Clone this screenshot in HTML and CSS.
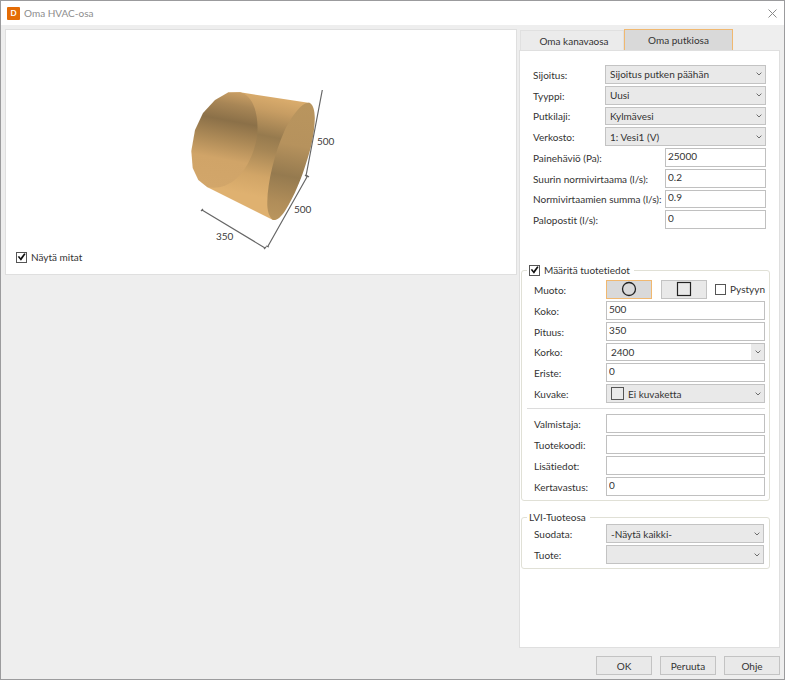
FILE: index.html
```html
<!DOCTYPE html>
<html lang="fi">
<head>
<meta charset="utf-8">
<title>Oma HVAC-osa</title>
<link rel="stylesheet" href="styles.css">
</head>
<body>
<svg class="symbols" width="0" height="0" aria-hidden="true">
  <symbol id="chevron" viewBox="0 0 6 4"><path d="M.6.6 3 3 5.4.6" fill="none" stroke="#6c6c6c" stroke-width="1"/></symbol>
</svg>
<div class="dialog">
  <header class="titlebar">
    <span class="logo">D</span>
    <h1 class="title">Oma HVAC-osa</h1>
    <button class="close" type="button" aria-label="Sulje">
      <svg width="9" height="9" viewBox="0 0 9 9"><path d="M.5.5l8 8M8.500.5l-8 8" fill="none" stroke="#8a8a8a"/></svg>
    </button>
  </header>

  <main class="content">
    <section class="preview">
      <svg class="model" width="170" height="165" viewBox="176 85 170 165">
        <defs>
          <linearGradient id="side" gradientUnits="userSpaceOnUse" x1="265" y1="94" x2="245" y2="194">
            <stop offset="0" stop-color="#dbad6d"/>
            <stop offset=".15" stop-color="#c79d63"/>
            <stop offset=".4" stop-color="#967a4e"/>
            <stop offset=".54" stop-color="#a68655"/>
            <stop offset=".8" stop-color="#d1a567"/>
            <stop offset="1" stop-color="#dfb170"/>
          </linearGradient>
          <linearGradient id="back" gradientUnits="userSpaceOnUse" x1="230" y1="91" x2="212" y2="187">
            <stop offset="0" stop-color="#c99e64"/>
            <stop offset=".13" stop-color="#a88656"/>
            <stop offset=".3" stop-color="#8b7048"/>
            <stop offset=".5" stop-color="#ad8a57"/>
            <stop offset=".7" stop-color="#d0a468"/>
            <stop offset="1" stop-color="#d2a66a"/>
          </linearGradient>
          <linearGradient id="front" gradientUnits="userSpaceOnUse" x1="300" y1="104" x2="278" y2="220">
            <stop offset="0" stop-color="#b9955e"/>
            <stop offset=".35" stop-color="#b6925d"/>
            <stop offset=".62" stop-color="#957a4f"/>
            <stop offset=".85" stop-color="#b08d59"/>
            <stop offset="1" stop-color="#b9955e"/>
          </linearGradient>
        </defs>
        <path fill="url(#side)" d="M228 92.500 240 92.300 310 103 290 170 273 220 207 187Z"/>
        <path fill="url(#back)" d="M240 92.300 228 92.500 215 100 203 113 195 130 191.300 151 192.700 168 198.300 180 207 187C216 189 227 187 237 178 248 168 257 147 257.500 130 258 111 252 95 240 92.300Z"/>
        <path fill="url(#front)" d="M310 103C313 105 314.700 110 314.800 118 314.500 134 311 149 306 163.500 302 177 294 197 285 211 281 217 277 220.500 273 220 269 217 267 210 267.300 202 267.500 182 275 152 284 132 292 115 303 101 310 103Z"/>
        <g fill="none" stroke="#666" stroke-width="1.200">
          <path d="M322.300 90 306 176M305 175l2.500 2M307.500 176 267.500 247M306 175l3 2M266 246l3 1M202 210l63 38M201 211l2-2M264 249l2-2"/>
        </g>
        <g class="dimension">
          <text x="317" y="145">500</text>
          <text x="294" y="213">500</text>
          <text x="216" y="240">350</text>
        </g>
      </svg>
      <label class="check show-dims"><input type="checkbox" checked>Näytä mitat</label>
    </section>

    <section class="side">
      <div class="tabs" role="tablist">
        <button class="tab" type="button" role="tab">Oma kanavaosa</button>
        <button class="tab active" type="button" role="tab" aria-selected="true">Oma putkiosa</button>
      </div>
      <form class="panel">
        <div class="rows main-rows">
          <div class="row"><label for="sijoitus">Sijoitus:</label><span class="select"><select id="sijoitus"><option>Sijoitus putken päähän</option></select><svg class="arrow"><use href="#chevron"/></svg></span></div>
          <div class="row"><label for="tyyppi">Tyyppi:</label><span class="select"><select id="tyyppi"><option>Uusi</option></select><svg class="arrow"><use href="#chevron"/></svg></span></div>
          <div class="row"><label for="putkilaji">Putkilaji:</label><span class="select"><select id="putkilaji"><option>Kylmävesi</option></select><svg class="arrow"><use href="#chevron"/></svg></span></div>
          <div class="row"><label for="verkosto">Verkosto:</label><span class="select"><select id="verkosto"><option>1: Vesi1 (V)</option></select><svg class="arrow"><use href="#chevron"/></svg></span></div>
          <div class="row wide-label"><label for="paine">Painehäviö (Pa):</label><input class="field" id="paine" type="text" value="25000"></div>
          <div class="row wide-label"><label for="suurin">Suurin normivirtaama (l/s):</label><input class="field" id="suurin" type="text" value="0.2"></div>
          <div class="row wide-label"><label for="summa">Normivirtaamien summa (l/s):</label><input class="field" id="summa" type="text" value="0.9"></div>
          <div class="row wide-label"><label for="palo">Palopostit (l/s):</label><input class="field" id="palo" type="text" value="0"></div>
        </div>

        <fieldset class="group product">
          <legend><label class="check"><input type="checkbox" checked>Määritä tuotetiedot</label></legend>
          <div class="rows shape-rows">
            <div class="row">
              <span class="caption">Muoto:</span>
              <div class="shapes">
                <button class="shape active" type="button" aria-label="Pyöreä"><svg width="16" height="16" viewBox="0 0 16 16"><circle cx="8" cy="8" r="6.500" fill="none" stroke="#222" stroke-width="1.300"/></svg></button>
                <button class="shape" type="button" aria-label="Suorakaide"><svg width="16" height="16" viewBox="0 0 16 16"><rect x="1.500" y="1.500" width="13" height="13" fill="none" stroke="#222" stroke-width="1.200"/></svg></button>
                <label class="check"><input type="checkbox">Pystyyn</label>
              </div>
            </div>
            <div class="row"><label for="koko">Koko:</label><input class="field" id="koko" type="text" value="500"></div>
            <div class="row"><label for="pituus">Pituus:</label><input class="field" id="pituus" type="text" value="350"></div>
            <div class="row"><label for="korko">Korko:</label><span class="combo"><input id="korko" type="text" value="2400"><button type="button" aria-label="Avaa"><svg width="6" height="4"><use href="#chevron"/></svg></button></span></div>
            <div class="row"><label for="eriste">Eriste:</label><input class="field" id="eriste" type="text" value="0"></div>
            <div class="row"><label for="kuvake">Kuvake:</label><span class="select with-icon"><span class="swatch"></span><select id="kuvake"><option>Ei kuvaketta</option></select><svg class="arrow"><use href="#chevron"/></svg></span></div>
          </div>
          <hr class="divider">
          <div class="rows info-rows">
            <div class="row"><label for="valmistaja">Valmistaja:</label><input class="field" id="valmistaja" type="text"></div>
            <div class="row"><label for="koodi">Tuotekoodi:</label><input class="field" id="koodi" type="text"></div>
            <div class="row"><label for="lisa">Lisätiedot:</label><input class="field" id="lisa" type="text"></div>
            <div class="row"><label for="kerta">Kertavastus:</label><input class="field" id="kerta" type="text" value="0"></div>
          </div>
        </fieldset>

        <fieldset class="group library">
          <legend>LVI-Tuoteosa</legend>
          <div class="rows">
            <div class="row"><label for="suodata">Suodata:</label><span class="select"><select id="suodata"><option>-Näytä kaikki-</option></select><svg class="arrow"><use href="#chevron"/></svg></span></div>
            <div class="row"><label for="tuote">Tuote:</label><span class="select"><select id="tuote"><option></option></select><svg class="arrow"><use href="#chevron"/></svg></span></div>
          </div>
        </fieldset>
      </form>
    </section>
  </main>

  <footer class="actions">
    <button type="button">OK</button>
    <button type="button">Peruuta</button>
    <button type="button">Ohje</button>
  </footer>
</div>
</body>
</html>
```
FILE: styles.css
```css
* {
  box-sizing: border-box;
}

body {
  margin: 0;
  color: #333;
  font: 10px/14px Lato, "Open Sans", sans-serif;
  font-variant-ligatures: none;
}

button,
input,
select {
  margin: 0;
  color: inherit;
  font: inherit;
}

.symbols {
  position: absolute;
}

.dialog {
  display: flex;
  flex-direction: column;
  min-height: 100vh;
  border: 1px solid #9b9b9d;
  background: #eee;
}

/* Title bar */
.titlebar {
  display: flex;
  align-items: center;
  height: 24px;
  padding: 0 7px 0 6px;
  background: #fff;
}

.logo {
  width: 13px;
  height: 13px;
  border-radius: 1px;
  background: #e46c05;
  color: #fff;
  font-size: 8px;
  font-weight: 700;
  line-height: 13px;
  text-align: center;
}

.title {
  margin: 0 auto 0 4px;
  color: #8c8c8c;
  font-size: 10px;
  font-weight: 400;
}

.close {
  display: flex;
  padding: 0;
  border: 0;
  background: none;
}

/* Columns */
.content {
  display: grid;
  flex: 1;
  grid-template-columns: 1fr 261px;
  align-items: start;
  gap: 2px;
  padding: 4px 4px 0;
}

.preview {
  display: flex;
  flex-direction: column;
  border: 1px solid #dfdfdf;
  background: #fff;
}

.model {
  align-self: center;
  margin-top: 55px;
}

.dimension {
  fill: #3c3c3c;
}

.show-dims {
  margin: 0 10px 10px;
}

.check {
  display: inline-flex;
  align-items: center;
  gap: 4px;
}

.check input {
  display: grid;
  width: 11px;
  height: 11px;
  place-items: center;
  appearance: none;
  border: 1px solid #555;
  background: #fff;
}

.check input:checked::before {
  width: 9px;
  height: 9px;
  background: #111;
  clip-path: polygon(8% 48%, 24% 38%, 40% 62%, 80% 8%, 96% 18%, 44% 92%);
  content: "";
}

/* Tabs and form */
.side {
  display: flex;
  flex-direction: column;
  align-self: stretch;
}

.tabs {
  display: flex;
  align-items: flex-end;
  padding-left: 1px;
}

.tab {
  width: 104px;
  height: 20px;
  padding: 0 0 0 4px;
  border: 1px solid #e0e0e0;
  border-bottom: 0;
  background: #ebebeb;
}

.tab.active {
  width: 109px;
  height: 21px;
  padding: 0;
  border-color: #f0b870;
  background: #d9d9d9;
}

.panel {
  flex: 1;
  padding: 14px 9px 0 1px;
  border: 1px solid #dfdfdf;
  background: #fff;
}

.rows {
  display: grid;
  grid-template-columns: minmax(0, 1fr);
  grid-auto-rows: 1fr;
  gap: 2px;
}

.main-rows {
  height: 164px;
  padding: 0 4px 0 12px;
}

.shape-rows {
  height: 123px;
}

.row {
  display: grid;
  grid-template-columns: 72px minmax(0, 1fr);
  grid-template-rows: minmax(0, 1fr);
  min-height: 0;
}

.row.wide-label {
  grid-template-columns: 132px minmax(0, 1fr);
}

.row > label,
.caption {
  align-self: center;
  padding-top: 1px;
  white-space: nowrap;
}

.field {
  width: 100%;
  min-width: 0;
  height: 100%;
  padding: 0 2px 3px;
  border: 1px solid #c0c0c0;
  background: #fff;
}

.select {
  position: relative;
  display: block;
  min-height: 0;
}

.select select {
  display: block;
  width: 100%;
  height: 100%;
  padding: 0 16px 0 4px;
  appearance: none;
  border: 1px solid #c3c3c3;
  border-radius: 0;
  background: #e9e9e9;
}

.arrow {
  position: absolute;
  top: calc(50% - 2px);
  right: 4px;
  width: 6px;
  height: 4px;
}

.with-icon select {
  padding-left: 21px;
}

.swatch {
  position: absolute;
  top: 3px;
  left: 5px;
  width: 13px;
  height: 13px;
  border: 1px solid #555;
}

.combo {
  display: flex;
  min-height: 0;
  border: 1px solid #c0c0c0;
}

.combo input {
  flex: 1;
  min-width: 0;
  padding: 0 4px;
  border: 0;
}

.combo button {
  display: grid;
  width: 13px;
  padding: 0;
  place-items: center;
  border: 0;
  background: #e9e9e9;
}

.group {
  min-width: 0;
  margin: 0;
  padding: 3px 4px 4px 12px;
  border: 1px solid #e0e0d6;
  border-radius: 3px;
}

.group legend {
  height: 14px;
  margin-left: -7px;
  padding: 0 4px 0 2px;
}

.product {
  margin-top: 34px;
}

.library {
  margin-top: 9px;
  padding: 0 5px 4px 12px;
}

.library .row,
.info-rows .row {
  height: 19px;
}

.shapes {
  display: flex;
  min-height: 0;
  justify-content: space-between;
}

.shape {
  display: grid;
  width: 46px;
  padding: 0;
  place-items: center;
  border: 1px solid #c3c3c3;
  background: #e9e9e9;
}

.shape.active {
  border-color: #f0b870;
  background: #d9d9d9;
}

.divider {
  height: 1px;
  margin: 5px 0 5px -7px;
  border: 0;
  background: #dcdcdc;
}

/* Footer */
.actions {
  display: flex;
  justify-content: flex-end;
  gap: 8px;
  padding: 8px 4px 4px;
}

.actions button {
  width: 56px;
  height: 19px;
  padding: 0;
  border: 1px solid #c3c3c3;
  background: #e9e9e9;
}
```
